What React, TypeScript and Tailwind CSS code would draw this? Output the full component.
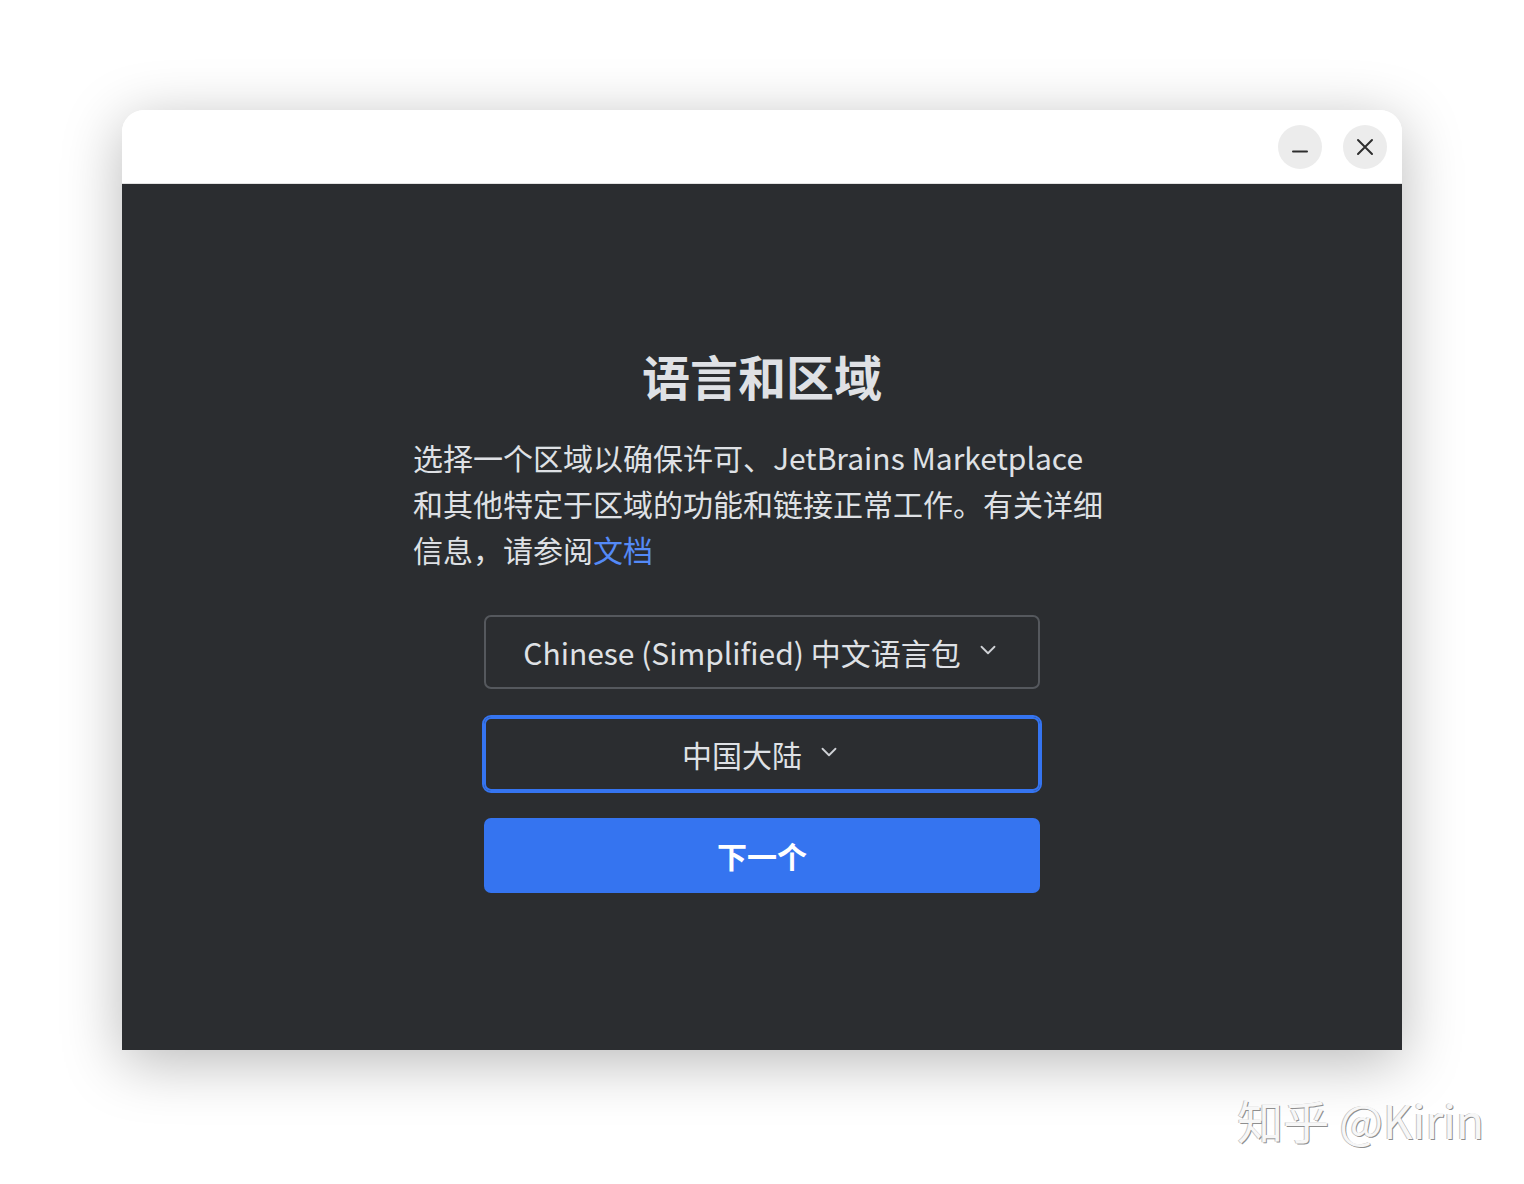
import { ChevronDown } from 'lucide-react';

const font = "font-['Noto_Sans_CJK_SC','Noto_Sans',sans-serif]";

function TitleBar() {
  return (
    <div className="h-[74px] bg-white border-b border-[#e2e2e2] flex items-center justify-end gap-[21px] pr-[15px]">
      <button className="w-[44px] h-[44px] rounded-full bg-[#ececec] flex items-center justify-center">
        <svg width="18" height="18" viewBox="0 0 18 18">
          <path d="M2 13.5h14" stroke="#2e2e2e" strokeWidth="2" strokeLinecap="round" />
        </svg>
      </button>
      <button className="w-[44px] h-[44px] rounded-full bg-[#ececec] flex items-center justify-center">
        <svg width="18" height="18" viewBox="0 0 18 18">
          <path d="M2 2l14 14M16 2L2 16" stroke="#2e2e2e" strokeWidth="2" strokeLinecap="round" />
        </svg>
      </button>
    </div>
  );
}

function Select({ label, focused }: { label: string; focused?: boolean }) {
  return (
    <button
      className={
        'w-[556px] h-[74px] rounded-[7px] bg-[#2b2d30] flex items-center justify-center gap-[14px] text-[30px] text-[#dfe1e5] ' +
        (focused
          ? 'border-2 border-[#3574f0] outline-2 outline-[#3574f0] outline-offset-0'
          : 'border-2 border-[#55585d]')
      }
    >
      <span>{label}</span>
      <ChevronDown className="w-[26px] h-[26px] text-[#cfd1d5] -mt-[4px]" strokeWidth={1.7} />
    </button>
  );
}

export default function App() {
  return (
    <div className={`relative min-h-[1184px] bg-white ${font}`}>
      <div className="pt-[110px] flex justify-center">
        <div className="w-[1280px] h-[940px] rounded-t-[22px] overflow-hidden shadow-[0_12px_60px_rgba(0,0,0,0.28)] flex flex-col">
          <TitleBar />
          <div className="flex-1 bg-[#2b2d30] flex flex-col items-center pt-[161px]">
            <h1 className="text-[48px] leading-[60px] font-bold text-[#dfe1e5]">语言和区域</h1>
            <p className="w-[698px] mt-[29px] text-[30px] leading-[46px] text-[#dfe1e5]">
              选择一个区域以确保许可、JetBrains Marketplace 和其他特定于区域的功能和链接正常工作。有关详细信息，请参阅<span className="text-[#548af7]">文档</span>
            </p>
            <div className="mt-[43px] flex flex-col gap-[28px]">
              <Select label="Chinese (Simplified) 中文语言包" />
              <Select label="中国大陆" focused />
              <button className="w-[556px] h-[75px] -mt-[1px] rounded-[7px] bg-[#3574f0] text-white text-[30px] font-bold">
                下一个
              </button>
            </div>
          </div>
        </div>
      </div>
      <div className="absolute right-[40px] top-[1090px] text-[46px] leading-[58px] text-[#f7f7f7] [text-shadow:1px_1px_0_#8f8f8f,-1px_0_0_#c4c4c4]">
        知乎 @Kirin
      </div>
    </div>
  );
}
